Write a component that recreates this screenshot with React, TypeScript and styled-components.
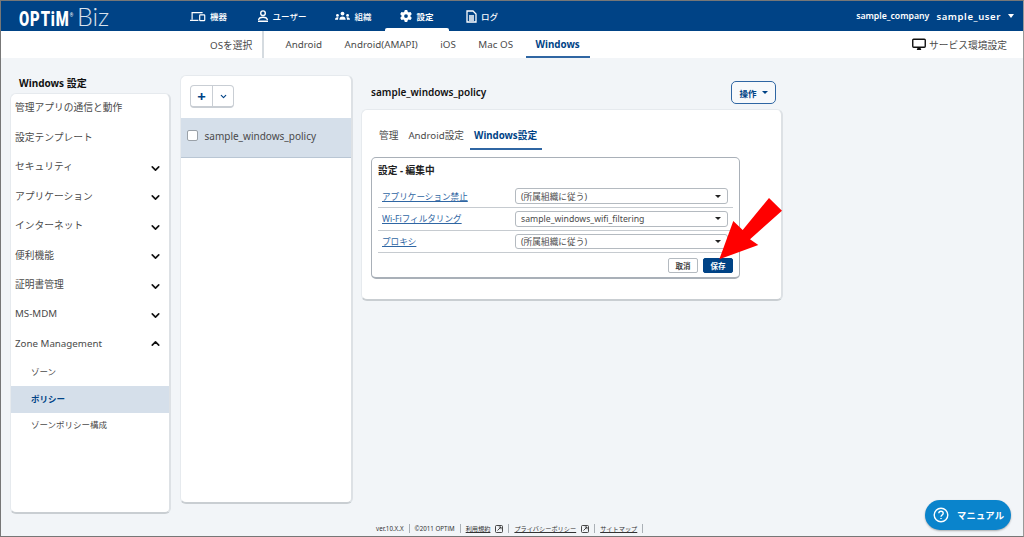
import React from "react";
import styled, { createGlobalStyle } from "styled-components";
import { FaGear } from "react-icons/fa6";
import { FiChevronDown, FiChevronUp } from "react-icons/fi";

const GlobalStyle = createGlobalStyle`
  html, body { margin: 0; padding: 0; }
  body { font-family: "Noto Sans", "Noto Sans CJK JP", sans-serif; color: #3c3c3c; }
  * { box-sizing: border-box; }
`;

const navy = "#004386";

const Frame = styled.div`
  position: relative;
  width: 1024px;
  height: 537px;
  overflow: hidden;
  background: #f2f5f8;
  border: 1px solid #777;
  border-right-color: #999;
  display: flex;
  flex-direction: column;
`;

const Header = styled.header`
  height: 30px;
  flex: none;
  background: ${navy};
  display: flex;
  align-items: center;
  color: #fff;
  padding: 0 9px 0 18px;
`;

const Logo = styled.div`
  width: 157px;
  display: flex;
  align-items: baseline;
  gap: 7px;
`;
const LogoMark = styled.span`
  font: 900 20px/1 "Roboto", sans-serif;
  letter-spacing: 1.2px;
  transform: scaleX(0.74);
  transform-origin: left;
  width: 51px;
  white-space: nowrap;
`;
const LogoReg = styled.span`
  font-size: 6px;
  vertical-align: 9px;
  letter-spacing: 0;
`;
const LogoBiz = styled.span`
  font: 300 25px/1 "Lato", sans-serif;
  opacity: 0.85;
`;

const MainNav = styled.nav`
  display: flex;
  height: 30px;
  flex: 1;
`;
const MainNavItem = styled.div<{ $w: number; $active?: boolean }>`
  width: ${(p) => p.$w}px;
  display: flex;
  align-items: center;
  justify-content: center;
  gap: 4px;
  font-size: 8.5px;
  font-weight: ${(p) => (p.$active ? 700 : 500)};
  position: relative;
  &::after {
    content: "";
    display: ${(p) => (p.$active ? "block" : "none")};
    position: absolute;
    left: 0;
    right: 0;
    bottom: 0;
    height: 3.5px;
    background: #fff;
    border-radius: 2px 2px 0 0;
  }
`;

const Account = styled.div`
  display: flex;
  align-items: center;
  gap: 7px;
  font-weight: 600;
`;
const Company = styled.span`
  font-size: 8.7px;
`;
const UserName = styled.span`
  font-size: 9.5px;
  letter-spacing: 0.6px;
`;
const Caret = styled.span<{ $color?: string; $small?: boolean }>`
  display: inline-block;
  width: 0;
  height: 0;
  border-left: ${(p) => (p.$small ? 3 : 3.5)}px solid transparent;
  border-right: ${(p) => (p.$small ? 3 : 3.5)}px solid transparent;
  border-top: ${(p) => (p.$small ? 3 : 4)}px solid ${(p) => p.$color ?? "#fff"};
`;

const SubNav = styled.div`
  height: 27px;
  flex: none;
  background: #fff;
  display: flex;
  align-items: stretch;
  padding: 0 16px 0 209px;
  font-size: 9.8px;
  color: #4a4a4a;
`;
const OsLabel = styled.div`
  display: flex;
  align-items: center;
  padding-right: 10px;
  border-right: 2px solid #d5dbe0;
`;
const OsTab = styled.div<{ $active?: boolean }>`
  display: flex;
  align-items: center;
  padding: 0 10px;
  margin-left: 2.5px;
  font-weight: ${(p) => (p.$active ? 700 : 400)};
  color: ${(p) => (p.$active ? navy : "#4a4a4a")};
  border-bottom: 2px solid ${(p) => (p.$active ? "#2f66a3" : "transparent")};
  border-top: 2px solid transparent;
`;
const OsTabs = styled.div`
  display: flex;
  margin-left: 8.5px;
  flex: 1;
`;
const ServiceLink = styled.div`
  display: flex;
  align-items: center;
  gap: 3px;
  font-size: 9.75px;
`;

const Content = styled.main`
  flex: 1;
  min-height: 0;
  display: flex;
  align-items: flex-start;
  padding: 17px 0 0 9px;
`;

const card = `
  background: #fff;
  border: 1px solid #e6eaee;
  border-bottom: 2px solid #c9ced2;
  border-right: 2px solid #dde1e5;
  border-radius: 6px;
`;

const SideColumn = styled.aside`
  width: 161px;
  margin-right: 8.5px;
  flex: none;
`;
const SideTitle = styled.h2`
  margin: 0;
  height: 18px;
  padding-left: 9px;
  font-size: 10px;
  line-height: 16px;
  font-weight: 700;
  color: #111;
`;
const SideCard = styled.div`
  ${card}
  height: 421px;
`;
const SideRow = styled.div`
  height: 29.5px;
  display: flex;
  align-items: center;
  justify-content: space-between;
  padding: 0 7px 3px 4px;
  font-size: 9.75px;
  color: #4a4a4a;
`;
const SideSub = styled.div<{ $active?: boolean }>`
  height: 26.6px;
  display: flex;
  align-items: center;
  padding: 0 0 3px 20px;
  font-size: 8.5px;
  font-weight: ${(p) => (p.$active ? 700 : 400)};
  color: ${(p) => (p.$active ? navy : "#4a4a4a")};
  background: ${(p) => (p.$active ? "#d5dfea" : "transparent")};
`;
const SideChevron = styled.span<{ $up?: boolean }>`
  display: flex;
  color: #111;
  font-size: 13px;
  margin-top: ${(p) => (p.$up ? 0 : 4)}px;
`;

const ListCard = styled.section`
  ${card}
  width: 173.5px;
  height: 429px;
  margin-right: 8px;
  flex: none;
  overflow: hidden;
`;
const ListToolbar = styled.div`
  height: 41.5px;
  display: flex;
  align-items: center;
  padding-left: 9.500px;
`;
const SplitButton = styled.div`
  display: flex;
  width: 44px;
  height: 23px;
  border: 1px solid #c9ced4;
  border-bottom-width: 2px;
  border-radius: 4px;
  color: ${navy};
`;
const SplitPart = styled.div<{ $divider?: boolean }>`
  flex: ${(p) => (p.$divider ? "0 0 21px" : "1")};
  display: flex;
  align-items: center;
  justify-content: center;
  font-size: 15px;
  line-height: 1;
  border-left: ${(p) => (p.$divider ? "1px solid #c9ced4" : "none")};
`;
const ListRow = styled.div`
  height: 40px;
  display: flex;
  align-items: center;
  gap: 6.5px;
  padding: 0 0 3px 6.500px;
  font-size: 10px;
  color: #4a4a4a;
  background: #d5dfea;
  border-bottom: 1px solid #b9c6d4;
`;
const CheckBox = styled.span`
  width: 11px;
  height: 11px;
  background: #fff;
  border: 1px solid #9aa1a8;
  border-radius: 2px;
`;

const MainColumn = styled.section`
  width: 422px;
  flex: none;
`;
const MainHead = styled.div`
  height: 34px;
  display: flex;
  align-items: flex-start;
  justify-content: space-between;
  padding: 6px 7px 0 10px;
`;
const PolicyName = styled.h1`
  margin: 4px 0 0;
  font-size: 10px;
  line-height: 14px;
  font-weight: 600;
  color: #111;
`;
const ActionButton = styled.button`
  width: 45px;
  height: 23px;
  display: flex;
  align-items: center;
  justify-content: center;
  gap: 5px;
  padding: 0;
  background: #f7f9fb;
  border: 1px solid #2f66a3;
  border-radius: 5px;
  color: ${navy};
  font: 700 8.5px "Noto Sans", "Noto Sans CJK JP", sans-serif;
`;
const PolicyCard = styled.div`
  ${card}
  height: 192px;
  padding: 6px 0 0 9px;
`;
const Tabs = styled.div`
  display: flex;
  gap: 1px;
  height: 34px;
  padding-left: 3.5px;
`;
const Tab = styled.div<{ $active?: boolean }>`
  display: flex;
  align-items: center;
  padding: 5px 4.5px 0;
  font-size: 9.7px;
  font-weight: ${(p) => (p.$active ? 700 : 400)};
  color: ${(p) => (p.$active ? navy : "#4a4a4a")};
  border-bottom: 2px solid ${(p) => (p.$active ? "#2f66a3" : "transparent")};
`;
const Editor = styled.div`
  margin-top: 7px;
  width: 369px;
  height: 122px;
  border: 1px solid #a9b0b8;
  border-bottom-width: 2px;
  border-radius: 5px;
  padding: 5px 6px 0;
`;
const EditorTitle = styled.h3`
  margin: 0 0 6.4px;
  height: 16px;
  font-size: 9.7px;
  line-height: 16px;
  font-weight: 700;
  color: #222;
`;
const SettingRow = styled.div`
  height: 22.6px;
  display: grid;
  grid-template-columns: 133px 213px;
  align-items: center;
  padding-left: 4px;
  border-bottom: 1px solid #c6cbd0;
`;
const SettingLink = styled.a`
  font-size: 8.6px;
  color: #2f66a3;
  text-decoration: underline;
`;
const SelectBox = styled.div`
  height: 15.5px;
  display: flex;
  align-items: center;
  justify-content: space-between;
  padding: 0 6px 0 5px;
  font-size: 8.7px;
  color: #4a4a4a;
  border: 1px solid #b4bac0;
  border-radius: 3px;
  background: #fff;
`;
const EditorActions = styled.div`
  display: flex;
  justify-content: flex-end;
  gap: 5px;
  padding-top: 5px;
`;
const SmallButton = styled.button<{ $primary?: boolean }>`
  width: 30px;
  height: 15px;
  padding: 0;
  font: 700 7.5px "Noto Sans", "Noto Sans CJK JP", sans-serif;
  border-radius: 2px;
  color: ${(p) => (p.$primary ? "#fff" : "#444")};
  background: ${(p) => (p.$primary ? navy : "#fff")};
  border: 1px solid ${(p) => (p.$primary ? navy : "#b4bac0")};
`;

const Footer = styled.footer`
  position: absolute;
  left: 375px;
  bottom: 2px;
  display: flex;
  align-items: center;
  font-size: 6.2px;
  color: #333;
  height: 11px;
`;
const FootItem = styled.span<{ $link?: boolean }>`
  display: flex;
  align-items: center;
  gap: 5px;
  height: 9px;
  padding-right: 5px;
  margin-right: 5px;
  border-right: 1px solid #aab0b6;
  span {
    text-decoration: ${(p) => (p.$link ? "underline" : "none")};
  }
`;

const ManualButton = styled.div`
  position: absolute;
  right: 12px;
  bottom: 6px;
  width: 86px;
  height: 30px;
  display: flex;
  align-items: center;
  gap: 8px;
  padding-left: 8px;
  border-radius: 15px;
  background: #0a84cc;
  color: #fff;
  font-size: 9.3px;
  font-weight: 700;
  letter-spacing: 0.2px;
  box-shadow: 0 1px 2px rgba(0, 0, 0, 0.3);
`;

const Arrow = styled.svg`
  position: absolute;
  left: 715px;
  top: 197px;
`;

const DeviceIcon = () => (
  <svg width="16" height="11" viewBox="0 0 19 12" fill="none" stroke="#fff" strokeWidth="1.4">
    <path d="M2.5 10V1.5H15" />
    <path d="M0 10.600H10" />
    <rect x="11.5" y="4" width="6" height="7" rx="0.8" />
  </svg>
);
const UserIcon = () => (
  <svg width="12" height="12" viewBox="0 0 12 12" fill="none" stroke="#fff" strokeWidth="1.4">
    <circle cx="6" cy="3.2" r="2.3" />
    <path d="M1 11.2h10M1.6 10c.3-2 2-2.8 4.400-2.8s4.100.8 4.400 2.800" />
  </svg>
);
const OrgIcon = () => (
  <svg width="15" height="10" viewBox="0 0 16 10" fill="#fff">
    <circle cx="8" cy="2.4" r="2" />
    <circle cx="2.6" cy="4.4" r="1.5" />
    <circle cx="13.4" cy="4.4" r="1.5" />
    <path d="M4.600 9c0-2.400 1.400-3.600 3.400-3.600s3.400 1.200 3.400 3.600zM0 9c0-1.600.9-2.800 2.600-2.800.5 0 .9.1 1.200.3C3.400 7.200 3.200 8 3.200 9zM16 9c0-1.600-.9-2.800-2.600-2.800-.5 0-.9.1-1.200.3.4.7.6 1.500.6 2.500z" />
  </svg>
);
const DocIcon = () => (
  <svg width="11" height="13" viewBox="0 0 11 13" fill="none" stroke="#fff" strokeWidth="1.3">
    <path d="M1 1h6l3 3v8H1z" />
    <path d="M3 6h5M3 8h5M3 10h5" />
  </svg>
);
const MonitorIcon = () => (
  <svg width="14" height="13" viewBox="0 0 15 13">
    <rect x="0.8" y="0.8" width="13.4" height="8.6" rx="1" fill="#fff" stroke="#111" strokeWidth="1.5" />
    <path d="M5 12.500h5L9 10H6z" fill="#111" />
  </svg>
);
const ExternalIcon = () => (
  <svg width="8" height="8" viewBox="0 0 8 8" fill="none" stroke="#333" strokeWidth="0.9">
    <rect x="0.5" y="0.5" width="7" height="7" rx="1" />
    <path d="M2.500 5.500L6 2M3.800 2H6v2.200" />
  </svg>
);
const HelpIcon = () => (
  <svg width="16" height="16" viewBox="0 0 16 16" fill="none" stroke="#fff" strokeWidth="1.4">
    <circle cx="8" cy="8" r="6.8" />
    <path d="M5.800 6.200C5.900 4.900 6.800 4.200 8 4.200s2.200.8 2.200 2c0 1.700-2.200 1.800-2.200 3.500" />
    <path d="M8 10.900v1.200" />
  </svg>
);

const sideItems: { label: string; chevron?: boolean }[] = [
  { label: "管理アプリの通信と動作" },
  { label: "設定テンプレート" },
  { label: "セキュリティ", chevron: true },
  { label: "アプリケーション", chevron: true },
  { label: "インターネット", chevron: true },
  { label: "便利機能", chevron: true },
  { label: "証明書管理", chevron: true },
  { label: "MS-MDM", chevron: true },
];

const settings = [
  { label: "アプリケーション禁止", value: "(所属組織に従う)" },
  { label: "Wi-Fiフィルタリング", value: "sample_windows_wifi_filtering" },
  { label: "プロキシ", value: "(所属組織に従う)" },
];

export default function App() {
  return (
    <Frame>
      <GlobalStyle />
      <Header>
        <Logo>
          <LogoMark>OPTiM<LogoReg>®</LogoReg></LogoMark>
          <LogoBiz>Biz</LogoBiz>
        </Logo>
        <MainNav>
          <MainNavItem $w={65}><DeviceIcon />機器</MainNavItem>
          <MainNavItem $w={81}><UserIcon />ユーザー</MainNavItem>
          <MainNavItem $w={63}><OrgIcon />組織</MainNavItem>
          <MainNavItem $w={64} $active><FaGear size={12} />設定</MainNavItem>
          <MainNavItem $w={66}><DocIcon />ログ</MainNavItem>
        </MainNav>
        <Account>
          <Company>sample_company</Company>
          <UserName>sample_user</UserName>
          <Caret />
        </Account>
      </Header>
      <SubNav>
        <OsLabel>OSを選択</OsLabel>
        <OsTabs>
          <OsTab>Android</OsTab>
          <OsTab>Android(AMAPI)</OsTab>
          <OsTab>iOS</OsTab>
          <OsTab>Mac OS</OsTab>
          <OsTab $active>Windows</OsTab>
        </OsTabs>
        <ServiceLink><MonitorIcon />サービス環境設定</ServiceLink>
      </SubNav>
      <Content>
        <SideColumn>
          <SideTitle>Windows 設定</SideTitle>
          <SideCard>
            {sideItems.map((item) => (
              <SideRow key={item.label}>
                {item.label}
                {item.chevron && <SideChevron><FiChevronDown strokeWidth={3} /></SideChevron>}
              </SideRow>
            ))}
            <SideRow>
              Zone Management
              <SideChevron $up><FiChevronUp strokeWidth={3} /></SideChevron>
            </SideRow>
            <SideSub>ゾーン</SideSub>
            <SideSub $active>ポリシー</SideSub>
            <SideSub>ゾーンポリシー構成</SideSub>
          </SideCard>
        </SideColumn>
        <ListCard>
          <ListToolbar>
            <SplitButton>
              <SplitPart><b>+</b></SplitPart>
              <SplitPart $divider><FiChevronDown strokeWidth={3} size={9} /></SplitPart>
            </SplitButton>
          </ListToolbar>
          <ListRow>
            <CheckBox />
            sample_windows_policy
          </ListRow>
        </ListCard>
        <MainColumn>
          <MainHead>
            <PolicyName>sample_windows_policy</PolicyName>
            <ActionButton>操作<Caret $color={navy} $small /></ActionButton>
          </MainHead>
          <PolicyCard>
            <Tabs>
              <Tab>管理</Tab>
              <Tab>Android設定</Tab>
              <Tab $active>Windows設定</Tab>
            </Tabs>
            <Editor>
              <EditorTitle>設定 - 編集中</EditorTitle>
              {settings.map((s) => (
                <SettingRow key={s.label}>
                  <SettingLink>{s.label}</SettingLink>
                  <SelectBox>{s.value}<Caret $color="#222" $small /></SelectBox>
                </SettingRow>
              ))}
              <EditorActions>
                <SmallButton>取消</SmallButton>
                <SmallButton $primary>保存</SmallButton>
              </EditorActions>
            </Editor>
          </PolicyCard>
        </MainColumn>
      </Content>
      <Footer>
        <FootItem>ver.10.X.X</FootItem>
        <FootItem>©2011 OPTiM</FootItem>
        <FootItem $link><span>利用規約</span><ExternalIcon /></FootItem>
        <FootItem $link><span>プライバシーポリシー</span><ExternalIcon /></FootItem>
        <FootItem $link><span>サイトマップ</span></FootItem>
      </Footer>
      <ManualButton><HelpIcon />マニュアル</ManualButton>
      <Arrow width="67" height="64" viewBox="0 0 67 64">
        <path d="M3.300 61.300L17.300 23L26.700 32L53 0L66 12.700L34 41.300L42.300 47Z" fill="#f00" />
      </Arrow>
    </Frame>
  );
}
